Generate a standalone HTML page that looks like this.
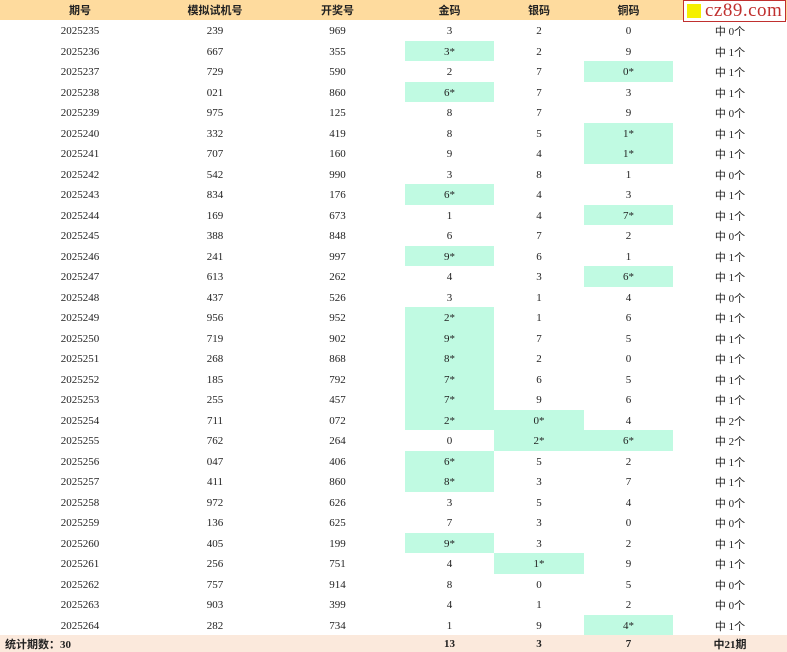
<!DOCTYPE html>
<html><head><meta charset="utf-8"><style>
*{margin:0;padding:0;box-sizing:border-box}
body{width:787px;height:652px;overflow:hidden;background:#fff;position:relative}
table{border-collapse:collapse;table-layout:fixed;width:787px}
td,th{text-align:center;padding:0;white-space:nowrap}
th{height:20px;background:#fedb9e;font:bold 11px "Liberation Sans","Noto Sans CJK SC",sans-serif;color:#222}
td{height:20.5px;padding-top:2px;font:11px "Liberation Serif","Noto Sans CJK SC",serif;color:#222}
td.h{background:#c0fae2}
tr.f td{background:#fbe9dc;font-weight:bold;height:17px;padding-top:0;font-family:"Liberation Serif","Noto Sans CJK SC",serif}
tr.f td.l{text-align:left;padding-left:5px}
.logo{position:absolute;left:683px;top:0;width:103px;height:22px;border:1px solid #c0302f;background:#fff;display:flex;align-items:center}
.logo i{display:block;width:14px;height:14px;background:#f5f000;margin:0 4px 0 3px}
.logo span{font:19px "Liberation Serif",serif;color:#c0302f;letter-spacing:0.5px;line-height:20px}
</style></head><body>
<table>
<colgroup><col style="width:160px"><col style="width:110px"><col style="width:135px"><col style="width:89px"><col style="width:90px"><col style="width:89px"><col style="width:114px"></colgroup>
<tr><th>期号</th><th>模拟试机号</th><th>开奖号</th><th>金码</th><th>银码</th><th>铜码</th><th></th></tr>
<tbody id="b"></tbody>
<tr class="f"><td class="l">统计期数：30</td><td></td><td></td><td>13</td><td>3</td><td>7</td><td>中21期</td></tr>
</table>
<div class="logo"><i></i><span>cz89.com</span></div>
<script>
var d=`235 239 969 3 2 0 0
236 667 355 3* 2 9 1
237 729 590 2 7 0* 1
238 021 860 6* 7 3 1
239 975 125 8 7 9 0
240 332 419 8 5 1* 1
241 707 160 9 4 1* 1
242 542 990 3 8 1 0
243 834 176 6* 4 3 1
244 169 673 1 4 7* 1
245 388 848 6 7 2 0
246 241 997 9* 6 1 1
247 613 262 4 3 6* 1
248 437 526 3 1 4 0
249 956 952 2* 1 6 1
250 719 902 9* 7 5 1
251 268 868 8* 2 0 1
252 185 792 7* 6 5 1
253 255 457 7* 9 6 1
254 711 072 2* 0* 4 2
255 762 264 0 2* 6* 2
256 047 406 6* 5 2 1
257 411 860 8* 3 7 1
258 972 626 3 5 4 0
259 136 625 7 3 0 0
260 405 199 9* 3 2 1
261 256 751 4 1* 9 1
262 757 914 8 0 5 0
263 903 399 4 1 2 0
264 282 734 1 9 4* 1`.split('\n');
var h='';d.forEach(function(l){var p=l.split(' ');h+='<tr><td>2025'+p[0]+'</td><td>'+p[1]+'</td><td>'+p[2]+'</td>';for(var i=3;i<6;i++){h+='<td'+(p[i].indexOf('*')>0?' class="h"':'')+'>'+p[i]+'</td>';}h+='<td>中 '+p[6]+'个</td></tr>';});
document.getElementById('b').innerHTML=h;
</script>
</body></html>
